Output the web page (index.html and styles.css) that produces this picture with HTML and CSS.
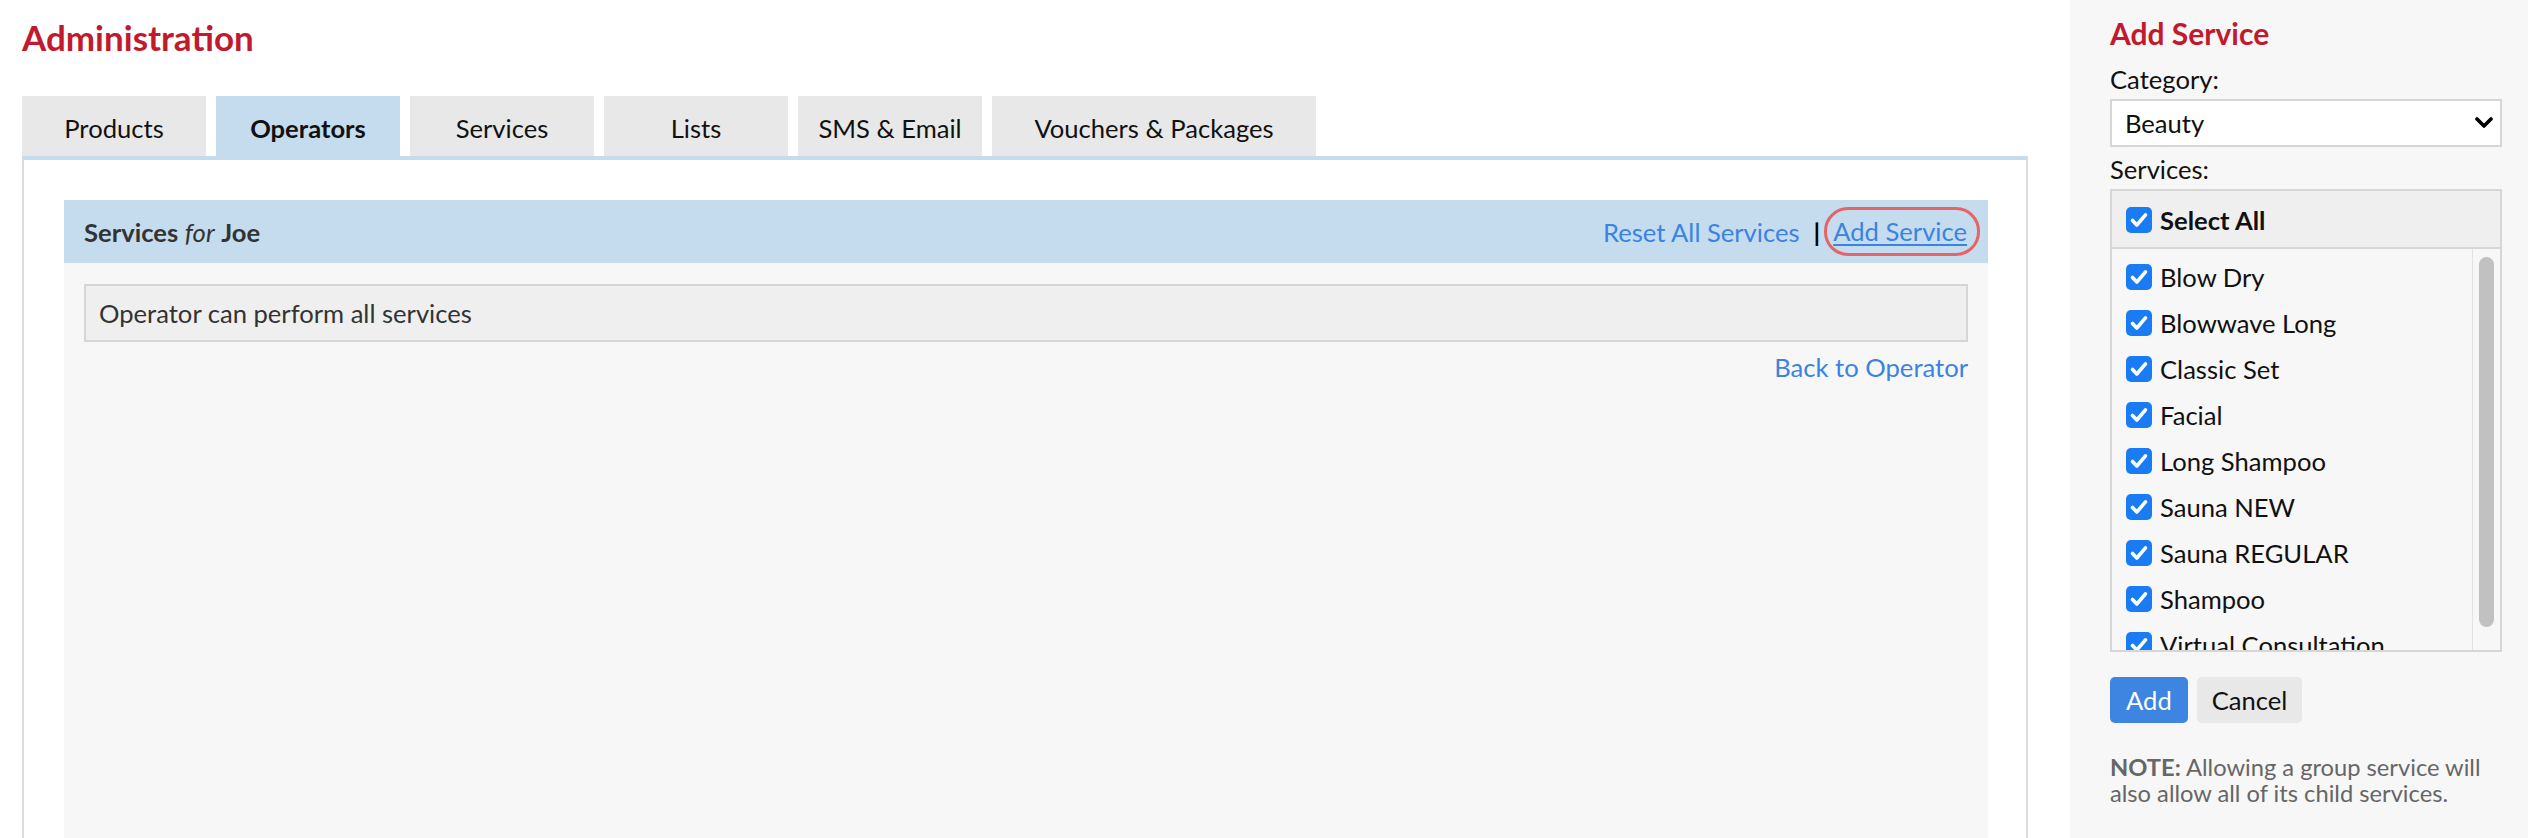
FILE: index.html
```html
<!DOCTYPE html>
<html>
<head>
	<title>Administration - Operators</title>
	<link rel="stylesheet" href="styles.css">
</head>
<body>

	<div class="page">

		<div class="main">
			<h1 class="title">Administration</h1>

			<div class="tabs">
				<a class="tab">Products</a>
				<a class="tab active">Operators</a>
				<a class="tab">Services</a>
				<a class="tab">Lists</a>
				<a class="tab">SMS &amp; Email</a>
				<a class="tab wide">Vouchers &amp; Packages</a>
			</div>

			<div class="panel">
				<div class="card">
					<div class="cardHead">
						<div class="cardTitle"><b>Services</b> <i>for</i> <b>Joe</b></div>
						<div class="cardLinks">
							<a class="link">Reset All Services</a>
							<span class="sep">|</span>
							<span class="circled"><a class="link under">Add Service</a></span>
						</div>
					</div>

					<div class="cardBody">
						<div class="message">Operator can perform all services</div>
						<div class="backRow"><a class="link">Back to Operator</a></div>
					</div>
				</div>
			</div>
		</div>

		<div class="side">
			<h2 class="sideTitle">Add Service</h2>

			<div class="label">Category:</div>
			<div class="select">
				<span>Beauty</span>
				<svg class="chev" width="18" height="12" viewBox="0 0 18 12">
					<path d="M2 2 L9 9 L16 2" fill="none" stroke="#000" stroke-width="3.6" stroke-linecap="round" stroke-linejoin="round"/>
				</svg>
			</div>

			<div class="label">Services:</div>
			<div class="listBox">
				<div class="listHead">
					<label class="row bold">
						<svg class="cb" width="26" height="26" viewBox="0 0 26 26"><rect width="26" height="26" rx="5" fill="#1a7cf5"/><path d="M6.5 13.5 L10.8 18 L19.5 7.8" fill="none" stroke="#fff" stroke-width="3.6" stroke-linecap="round" stroke-linejoin="round"/></svg>
						Select All
					</label>
				</div>
				<div class="listWrap">
					<div class="items" id="items"></div>
					<div class="scroll"><div class="thumb"></div></div>
				</div>
			</div>

			<div class="buttons">
				<button type="button" class="btn primary">Add</button>
				<button type="button" class="btn">Cancel</button>
			</div>

			<p class="note"><b>NOTE:</b> Allowing a group service will also allow all of its child services.</p>
		</div>

	</div>

	<script type="text/javascript">
		// services in the beauty category, all ticked
		var services = ["Blow Dry", "Blowwave Long", "Classic Set", "Facial", "Long Shampoo",
			"Sauna NEW", "Sauna REGULAR", "Shampoo", "Virtual Consultation"];

		var box = document.getElementById("items");
		var tick = '<svg class="cb" width="26" height="26" viewBox="0 0 26 26"><rect width="26" height="26" rx="5" fill="#1a7cf5"/>'
			+ '<path d="M6.5 13.5 L10.8 18 L19.5 7.8" fill="none" stroke="#fff" stroke-width="3.6" stroke-linecap="round" stroke-linejoin="round"/></svg>';

		services.forEach(function (name) {
			var row = document.createElement("label");
			row.className = "row";
			row.innerHTML = tick + name;
			box.appendChild(row);
		});
	</script>

</body>
</html>
```

FILE: styles.css
```css
body {
	margin: 0;
	font-family: Lato, "Open Sans", sans-serif;
	font-size: 25.6px;
	color: #111;
	background: #fff;
}

.page {
	display: flex;
	min-height: 838px;
}

/* left part */

.main {
	flex: 1;
	display: flex;
	flex-direction: column;
	padding: 0 42px 0 22px;
}

.title {
	margin: 16px 0 38px 0;
	font-size: 35px;
	line-height: 42px;
	font-weight: 700;
	color: #c11a2e;
}

.tabs {
	display: flex;
	gap: 10px;
}

.tab {
	width: 184px;
	box-sizing: border-box;
	height: 60px;
	padding-top: 4px;
	line-height: 56px;
	text-align: center;
	white-space: nowrap;
	background: #e8e8e8;
	color: #111;
}

.tab.wide {
	width: 324px;
}

.tab.active {
	background: #c4dcee;
	font-weight: 700;
}

.panel {
	flex: 1;
	display: flex;
	flex-direction: column;
	border-top: 4px solid #c4dcee;
	border-left: 2px solid #dcdcdc;
	border-right: 2px solid #dcdcdc;
	padding: 40px 38px 0 40px;
}

.card {
	flex: 1;
	background: #f7f7f7;
}

.cardHead {
	height: 63px;
	box-sizing: border-box;
	display: flex;
	justify-content: space-between;
	align-items: center;
	padding: 0 8px 0 20px;
	background: #c4dcee;
	color: #333;
}

.cardTitle b {
	font-weight: 700;
}

.cardLinks {
	display: flex;
	align-items: center;
}

.link {
	color: #3a83e2;
	cursor: pointer;
}

.link.under {
	text-decoration: underline;
	text-underline-offset: 3px;
}

.sep {
	color: #000;
	font-weight: 700;
	margin: 0 4px 0 14px;
}

.circled {
	border: 3px solid #e5636a;
	border-radius: 24px;
	padding: 6px 10px 7px 6px;
	line-height: 30px;
}

.cardBody {
	padding: 21px 20px 0 20px;
}

.message {
	height: 58px;
	box-sizing: border-box;
	border: 2px solid #d6d6d6;
	background: #efefef;
	padding: 0 13px;
	line-height: 54px;
	color: #333;
}

.backRow {
	text-align: right;
	margin-top: 10px;
}

/* right part */

.side {
	width: 458px;
	box-sizing: border-box;
	padding: 0 26px 0 40px;
	background: #f7f7f7;
}

.sideTitle {
	margin: 15px 0 13px 0;
	font-size: 30px;
	line-height: 36px;
	font-weight: 700;
	color: #c11a2e;
}

.label {
	line-height: 31px;
}

.select {
	margin: 4px 0 7px 0;
	height: 48px;
	box-sizing: border-box;
	border: 2px solid #d6d6d6;
	background: #fff;
	display: flex;
	justify-content: space-between;
	align-items: center;
	padding: 0 7px 0 13px;
}

.listBox {
	margin-top: 4px;
	height: 463px;
	box-sizing: border-box;
	border: 2px solid #d6d6d6;
	display: flex;
	flex-direction: column;
}

.listHead {
	height: 58px;
	box-sizing: border-box;
	background: #efefef;
	border-bottom: 2px solid #d6d6d6;
	display: flex;
	align-items: center;
}

.listWrap {
	flex: 1;
	display: flex;
	overflow: hidden;
}

.items {
	flex: 1;
	padding-top: 5px;
	overflow: hidden;
}

.row {
	display: flex;
	align-items: center;
	height: 46px;
	padding-left: 14px;
	gap: 8px;
	white-space: nowrap;
}

.row.bold {
	font-weight: 700;
	padding-top: 2px;
}

.cb {
	flex: none;
}

.scroll {
	width: 28px;
	border-left: 1px solid #e2e2e2;
	padding: 8px 0 23px 6px;
	box-sizing: border-box;
}

.thumb {
	width: 15px;
	height: 100%;
	border-radius: 8px;
	background: #c1c1c1;
}

.buttons {
	display: flex;
	gap: 9px;
	margin-top: 25px;
}

.btn {
	height: 46px;
	border: none;
	border-radius: 5px;
	padding: 0 15px;
	font-family: Lato, sans-serif;
	font-size: 25.6px;
	background: #e8e8e8;
	color: #111;
}

.btn.primary {
	background: #3d85e0;
	color: #fff;
	padding: 0 16px;
}

.note {
	margin: 31px 0 0 0;
	font-size: 23.7px;
	line-height: 26px;
	color: #666;
}
```
